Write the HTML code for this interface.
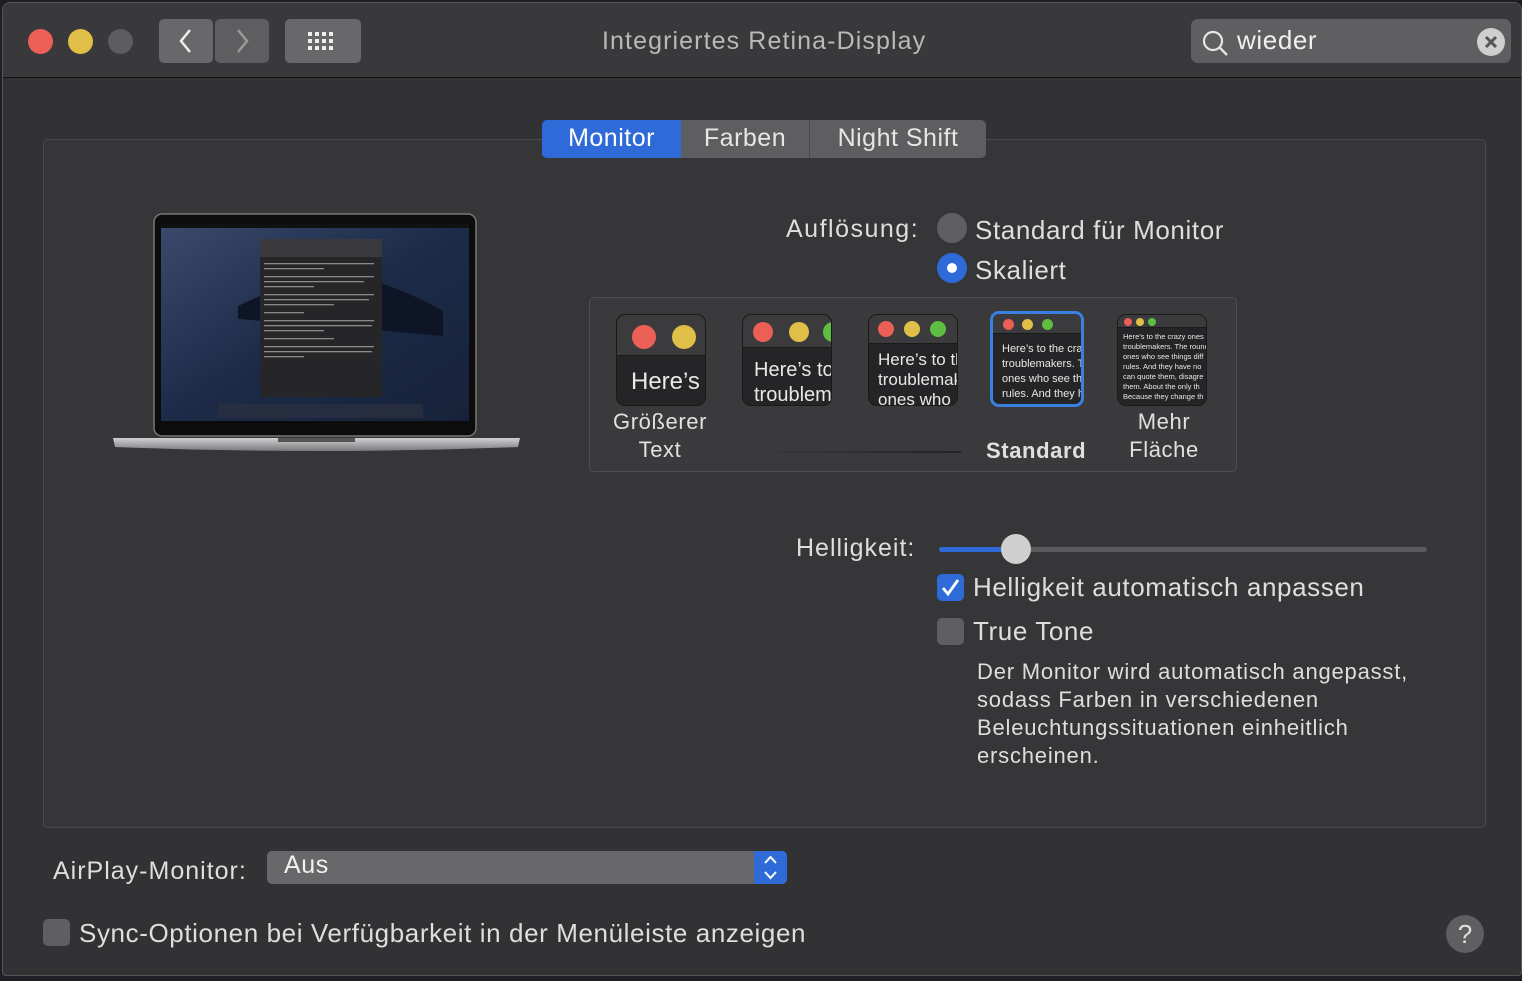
<!DOCTYPE html>
<html><head><meta charset="utf-8"><style>
*{margin:0;padding:0;box-sizing:border-box}
body{width:1522px;height:981px;background:#1d1f24;font-family:"Liberation Sans",sans-serif;color:#dedede;position:relative;overflow:hidden}
.win{position:absolute;left:2px;top:2px;width:1520px;height:974px;background:#323234;border-radius:8px 8px 4px 4px;border:1px solid #555;overflow:hidden}
.tb{position:absolute;left:0;top:0;width:100%;height:75px;background:#39393b;border-bottom:1px solid #111}
.a{position:absolute}
.dot{position:absolute;width:25px;height:25px;border-radius:50%}
.btn{position:absolute;background:#68686a;border-radius:5px}
.t{position:absolute;white-space:nowrap;font-size:24px;letter-spacing:0.6px}
.box{position:absolute;left:40px;top:136px;width:1443px;height:689px;background:#363638;border:1px solid #4a4a4c;border-radius:5px}
.tab{position:absolute;top:117px;height:38px;background:#5e5e60;font-size:25px;text-align:center;line-height:37px;color:#e6e6e6;letter-spacing:0.5px}
.th{position:absolute;top:313px;width:90px;height:92px;border-radius:9px;background:#252527;overflow:hidden;border:1px solid #1a1a1a}
.th .bar{position:absolute;left:0;top:0;width:100%;background:#3b3b3d;border-bottom:1px solid #1a1a1a}
.th .c{position:absolute;border-radius:50%}
.th .tx{position:absolute;white-space:nowrap;color:#e8e8e8;line-height:1.2}
.cb{position:absolute;width:27px;height:27px;border-radius:5px;background:#5f5f61}
</style></head><body>
<div class="win">
<div class="tb">
 <div class="dot" style="left:25px;top:26px;background:#ec5f57"></div>
 <div class="dot" style="left:65px;top:26px;background:#e0bf48"></div>
 <div class="dot" style="left:105px;top:26px;background:#5d5d5f"></div>
 <div class="btn" style="left:156px;top:16px;width:54px;height:44px"></div>
 <div class="btn" style="left:212px;top:16px;width:54px;height:44px;background:#5e5e60"></div>
 <svg class="a" style="left:172px;top:24px" width="22" height="28"><path d="M15 3 L6 14 L15 25" stroke="#eee" stroke-width="2.5" fill="none"/></svg>
 <svg class="a" style="left:228px;top:24px" width="22" height="28"><path d="M7 3 L16 14 L7 25" stroke="#9a9a9a" stroke-width="2.5" fill="none"/></svg>
 <div class="btn" style="left:282px;top:16px;width:76px;height:44px"></div>
 <svg class="a" style="left:305px;top:29px" width="30" height="20"><g fill="#eee">
 <rect x="0" y="0" width="4" height="4"/><rect x="7" y="0" width="4" height="4"/><rect x="14" y="0" width="4" height="4"/><rect x="21" y="0" width="4" height="4"/>
 <rect x="0" y="7" width="4" height="4"/><rect x="7" y="7" width="4" height="4"/><rect x="14" y="7" width="4" height="4"/><rect x="21" y="7" width="4" height="4"/>
 <rect x="0" y="14" width="4" height="4"/><rect x="7" y="14" width="4" height="4"/><rect x="14" y="14" width="4" height="4"/><rect x="21" y="14" width="4" height="4"/></g></svg>
 <div class="t" style="left:599px;top:24px;font-size:25px;color:#b9b9b9;letter-spacing:1.1px">Integriertes Retina-Display</div>
 <div class="btn" style="left:1188px;top:16px;width:320px;height:44px;background:#5f5f61;border-radius:7px"></div>
 <svg class="a" style="left:1198px;top:26px" width="30" height="30"><circle cx="12" cy="12" r="9" stroke="#e6e6e6" stroke-width="2.2" fill="none"/><path d="M18.5 18.5 L26 26" stroke="#e6e6e6" stroke-width="2.4"/></svg>
 <div class="t" style="left:1234px;top:22px;font-size:26px;color:#f0f0f0">wieder</div>
 <div class="a" style="left:1474px;top:25px;width:28px;height:28px;border-radius:50%;background:#cfcfcf"></div>
 <svg class="a" style="left:1474px;top:25px" width="28" height="28"><path d="M9 9 L19 19 M19 9 L9 19" stroke="#555" stroke-width="3"/></svg>
</div>
<div class="box"></div>
<div class="tab" style="left:539px;width:139px;background:#2f6bd8;border-radius:5px 0 0 5px;color:#fff">Monitor</div>
<div class="tab" style="left:678px;width:129px;border-right:1px solid #4a4a4c">Farben</div>
<div class="tab" style="left:807px;width:176px;border-radius:0 5px 5px 0">Night Shift</div>

<!-- laptop -->
<svg class="a" style="left:105px;top:208px" width="420" height="256">
 <defs><linearGradient id="sc" x1="0" y1="0" x2="1" y2="1"><stop offset="0" stop-color="#3b4a6c"/><stop offset="0.5" stop-color="#1c2b48"/><stop offset="1" stop-color="#17223a"/></linearGradient>
 <linearGradient id="bs" x1="0" y1="0" x2="0" y2="1"><stop offset="0" stop-color="#d0d0d2"/><stop offset="1" stop-color="#7a7a7c"/></linearGradient></defs>
 <rect x="46" y="3" width="322" height="222" rx="8" fill="#0c0c0c" stroke="#777" stroke-width="1.5"/>
 <rect x="53" y="13" width="308" height="197" fill="url(#sc)"/>
 <rect x="53" y="13" width="308" height="4" fill="#111"/>
 <path d="M130 95 Q200 60 260 68 Q300 80 335 100 L335 125 Q300 122 240 116 Q180 112 130 108Z" fill="#0d1526"/>
 <rect x="152" y="28" width="122" height="158" fill="#262628"/>
 <rect x="152" y="28" width="122" height="18" fill="#3a3a3c"/>
 <g fill="#8a8a8a"><rect x="156" y="52" width="110" height="1.3"/><rect x="156" y="57" width="60" height="1.3"/><rect x="156" y="65" width="110" height="1.3"/><rect x="156" y="70" width="100" height="1.3"/><rect x="156" y="75" width="50" height="1.3"/><rect x="156" y="83" width="110" height="1.3"/><rect x="156" y="88" width="105" height="1.3"/><rect x="156" y="93" width="70" height="1.3"/><rect x="156" y="101" width="40" height="1.3"/><rect x="156" y="109" width="110" height="1.3"/><rect x="156" y="114" width="108" height="1.3"/><rect x="156" y="119" width="60" height="1.3"/><rect x="156" y="127" width="70" height="1.3"/><rect x="156" y="135" width="110" height="1.3"/><rect x="156" y="140" width="108" height="1.3"/><rect x="156" y="145" width="40" height="1.3"/></g>
 <rect x="110" y="193" width="205" height="14" fill="#2a3040" opacity=".8"/>
 <path d="M5 227 L412 227 L410 236 Q208 244 7 236Z" fill="url(#bs)"/>
 <rect x="170" y="227" width="77" height="4" fill="#555"/>
</svg>

<div class="t" style="left:783px;top:212px;font-size:25px;letter-spacing:1.5px">Auflösung:</div>
<div class="a" style="left:934px;top:210px;width:30px;height:30px;border-radius:50%;background:#5f5f61"></div>
<div class="t" style="left:972px;top:212px;font-size:26px">Standard für Monitor</div>
<div class="a" style="left:934px;top:250px;width:30px;height:30px;border-radius:50%;background:#2f6bd8"></div>
<div class="a" style="left:944px;top:260px;width:10px;height:10px;border-radius:50%;background:#fff"></div>
<div class="t" style="left:972px;top:252px;font-size:26px">Skaliert</div>

<div class="a" style="left:586px;top:294px;width:648px;height:175px;border:1px solid #4e4e50;border-radius:5px;background:#3a3a3c"></div>
<div class="th" style="left:613px;top:311px"><div class="bar" style="height:41px"></div><div class="c" style="left:15px;top:10px;width:24px;height:24px;background:#ec5f57"></div><div class="c" style="left:55px;top:10px;width:24px;height:24px;background:#e0bf48"></div><div class="tx" style="left:14px;top:53px;font-size:24px">Here’s</div></div>
<div class="th" style="left:739px;top:311px"><div class="bar" style="height:33px"></div><div class="c" style="left:10px;top:7px;width:20px;height:20px;background:#ec5f57"></div><div class="c" style="left:46px;top:7px;width:20px;height:20px;background:#e0bf48"></div><div class="c" style="left:80px;top:7px;width:20px;height:20px;background:#5dbe41"></div><div class="tx" style="left:11px;top:43px;font-size:20px;line-height:25px">Here’s to the<br>troublemakers</div></div>
<div class="th" style="left:865px;top:311px"><div class="bar" style="height:29px"></div><div class="c" style="left:9px;top:6px;width:16px;height:16px;background:#ec5f57"></div><div class="c" style="left:35px;top:6px;width:16px;height:16px;background:#e0bf48"></div><div class="c" style="left:61px;top:6px;width:16px;height:16px;background:#5dbe41"></div><div class="tx" style="left:9px;top:35px;font-size:17px;line-height:20px">Here’s to the<br>troublemakers<br>ones who</div></div>
<div class="th" style="left:987px;top:308px;width:94px;height:96px;border:3px solid #3a80e0"><div class="bar" style="height:20px"></div><div class="c" style="left:10px;top:5px;width:11px;height:11px;background:#ec5f57"></div><div class="c" style="left:29px;top:5px;width:11px;height:11px;background:#e0bf48"></div><div class="c" style="left:49px;top:5px;width:11px;height:11px;background:#5dbe41"></div><div class="tx" style="left:9px;top:28px;font-size:11px;line-height:15px">Here’s to the crazy<br>troublemakers. The<br>ones who see things<br>rules. And they have</div></div>
<div class="th" style="left:1114px;top:311px"><div class="bar" style="height:13px"></div><div class="c" style="left:6px;top:3px;width:8px;height:8px;background:#ec5f57"></div><div class="c" style="left:18px;top:3px;width:8px;height:8px;background:#e0bf48"></div><div class="c" style="left:30px;top:3px;width:8px;height:8px;background:#5dbe41"></div><div class="tx" style="left:5px;top:17px;font-size:7.5px;line-height:10px">Here’s to the crazy ones<br>troublemakers. The round<br>ones who see things diff<br>rules. And they have no<br>can quote them, disagre<br>them. About the only th<br>Because they change th</div></div>
<div class="t" style="left:610px;top:405px;width:94px;text-align:center;font-size:22px;line-height:28px;color:#e0e0e0">Größerer<br>Text</div>
<div class="a" style="left:748px;top:448px;width:210px;height:2px;background:linear-gradient(90deg,#3a3a3c,#242426)"></div>
<div class="t" style="left:983px;top:435px;font-size:22px;font-weight:bold;color:#e0e0e0">Standard</div>
<div class="t" style="left:1114px;top:405px;width:94px;text-align:center;font-size:22px;line-height:28px;color:#e0e0e0">Mehr<br>Fläche</div>

<div class="t" style="left:793px;top:531px;font-size:25px;letter-spacing:1px">Helligkeit:</div>
<div class="a" style="left:936px;top:544px;width:488px;height:5px;border-radius:3px;background:#5a5a5c"></div>
<div class="a" style="left:936px;top:544px;width:80px;height:5px;border-radius:3px;background:#2f6bd8"></div>
<div class="a" style="left:998px;top:531px;width:30px;height:30px;border-radius:50%;background:#cfcfcf"></div>
<div class="cb" style="left:934px;top:571px;background:#2f6bd8"></div>
<svg class="a" style="left:934px;top:571px" width="27" height="27"><path d="M6 14 L11 20 L21 6" stroke="#fff" stroke-width="2.8" fill="none"/></svg>
<div class="t" style="left:970px;top:569px;font-size:26px">Helligkeit automatisch anpassen</div>
<div class="cb" style="left:934px;top:615px"></div>
<div class="t" style="left:970px;top:613px;font-size:26px">True Tone</div>
<div class="t" style="left:974px;top:655px;font-size:22px;line-height:28px;letter-spacing:0.8px">Der Monitor wird automatisch angepasst,<br>sodass Farben in verschiedenen<br>Beleuchtungssituationen einheitlich<br>erscheinen.</div>

<div class="t" style="left:50px;top:854px;font-size:25px;letter-spacing:1px">AirPlay-Monitor:</div>
<div class="a" style="left:264px;top:848px;width:520px;height:33px;border-radius:5px;background:#68686a"></div>
<div class="a" style="left:751px;top:848px;width:33px;height:33px;border-radius:0 5px 5px 0;background:#2f6bd8"></div>
<svg class="a" style="left:751px;top:848px" width="33" height="33"><path d="M11 12 L16.5 6 L22 12 M11 21 L16.5 27 L22 21" stroke="#fff" stroke-width="2" fill="none"/></svg>
<div class="t" style="left:281px;top:848px;font-size:25px;color:#f0f0f0">Aus</div>
<div class="cb" style="left:40px;top:916px"></div>
<div class="t" style="left:76px;top:915px;font-size:26px">Sync-Optionen bei Verfügbarkeit in der Menüleiste anzeigen</div>
<div class="a" style="left:1443px;top:912px;width:38px;height:38px;border-radius:50%;background:#5f5f61;text-align:center;line-height:38px;font-size:26px;color:#e0e0e0">?</div>
</div>
</body></html>
